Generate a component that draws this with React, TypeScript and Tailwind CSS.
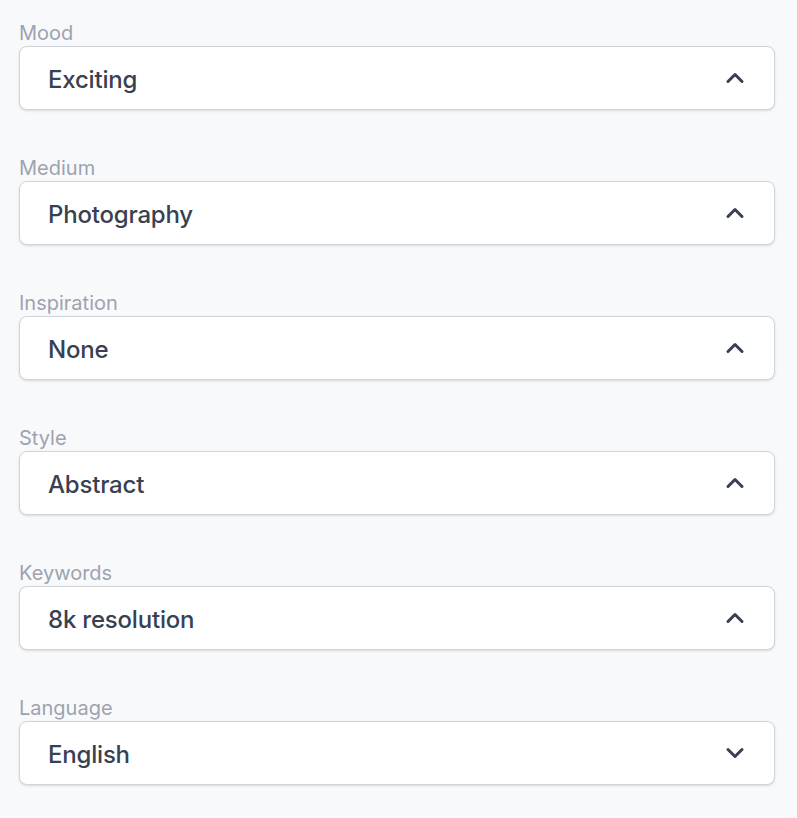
import { ChevronUp, ChevronDown } from 'lucide-react'

const FIELDS = [
    { label: 'Mood', value: 'Exciting', open: true },
    { label: 'Medium', value: 'Photography', open: true },
    { label: 'Inspiration', value: 'None', open: true },
    { label: 'Style', value: 'Abstract', open: true },
    { label: 'Keywords', value: '8k resolution', open: true },
    { label: 'Language', value: 'English', open: false },
]

export default function App() {
    return (
        <div
            className="min-h-[818px] bg-[#f8f9fb] pl-[19px] pr-[22px] pt-[18px] pb-[33px] flex flex-col gap-[43px]"
            style={{ fontFamily: 'Inter, "Noto Sans", sans-serif' }}
        >
            {FIELDS.map(({ label, value, open }) => (
                <div key={label}>
                    <label className="block pt-[2px] text-[20px] leading-[26px] text-[#9ca3af]">{label}</label>
                    <button className="w-full h-[64px] flex items-center justify-between pl-7 pr-[25px] bg-white border border-[#d1d5db] rounded-lg shadow-sm">
                        <span className="pt-[4px] text-[24px] tracking-[-0.2px] font-medium text-[#374151]">{value}</span>
                        {open
                            ? <ChevronUp size={28} strokeWidth={2.6} className="text-[#374151]" />
                            : <ChevronDown size={28} strokeWidth={2.6} className="text-[#374151]" />}
                    </button>
                </div>
            ))}
        </div>
    )
}
